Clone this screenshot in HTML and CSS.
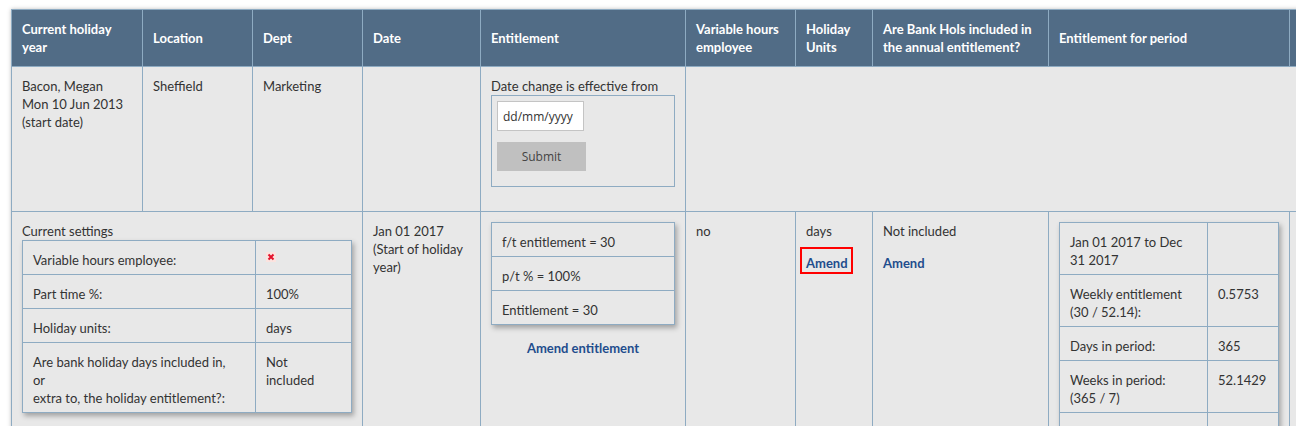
FILE: index.html
```html
<!DOCTYPE html>
<html lang="en">
<head>
    <meta charset="UTF-8">
    <title>Holiday entitlement</title>
    <link rel="stylesheet" href="styles.css">
</head>
<body>
    <div class="page">
        <table class="staff-grid">
            <colgroup>
                <col class="c-year">
                <col class="c-location">
                <col class="c-dept">
                <col class="c-date">
                <col class="c-ent">
                <col class="c-var">
                <col class="c-units">
                <col class="c-bank">
                <col class="c-period">
                <col class="c-more">
            </colgroup>
            <thead>
                <tr>
                    <th>Current holiday year</th>
                    <th>Location</th>
                    <th>Dept</th>
                    <th>Date</th>
                    <th>Entitlement</th>
                    <th>Variable hours employee</th>
                    <th>Holiday Units</th>
                    <th>Are Bank Hols included in the annual entitlement?</th>
                    <th>Entitlement for period</th>
                    <th></th>
                </tr>
            </thead>
            <tbody>
                <tr>
                    <td>Bacon, Megan<br>Mon 10 Jun 2013<br>(start date)</td>
                    <td>Sheffield</td>
                    <td>Marketing</td>
                    <td></td>
                    <td>
                        Date change is effective from
                        <form class="change-box" onsubmit="return false">
                            <input type="text" class="date-input" placeholder="dd/mm/yyyy">
                            <button type="submit" class="submit-btn">Submit</button>
                        </form>
                    </td>
                    <td colspan="5"></td>
                </tr>
                <tr>
                    <td colspan="3">
                        Current settings
                        <table class="inner settings">
                            <tr>
                                <td class="label">Variable hours employee:</td>
                                <td>
                                    <svg class="cross" width="10" height="10" viewBox="0 0 10 10">
                                        <rect width="10" height="10" fill="#fbe3df"/>
                                        <path d="M2.5 2.5 L7.5 7.5 M7.5 2.5 L2.5 7.5" stroke="#e3132c" stroke-width="2"/>
                                    </svg>
                                </td>
                            </tr>
                            <tr>
                                <td class="label">Part time %:</td>
                                <td>100%</td>
                            </tr>
                            <tr>
                                <td class="label">Holiday units:</td>
                                <td>days</td>
                            </tr>
                            <tr>
                                <td class="label">Are bank holiday days included in,<br>or<br>extra to, the holiday entitlement?:</td>
                                <td>Not<br>included</td>
                            </tr>
                        </table>
                    </td>
                    <td>Jan 01 2017<br>(Start of holiday<br>year)</td>
                    <td>
                        <table class="inner calc">
                            <tr><td>f/t entitlement = 30</td></tr>
                            <tr><td>p/t % = 100%</td></tr>
                            <tr><td>Entitlement = 30</td></tr>
                        </table>
                        <p class="centered"><a href="#" class="amend">Amend entitlement</a></p>
                    </td>
                    <td>no</td>
                    <td>
                        days
                        <p><a href="#" class="amend flagged">Amend</a></p>
                    </td>
                    <td>
                        Not included
                        <p><a href="#" class="amend">Amend</a></p>
                    </td>
                    <td>
                        <table class="inner period">
                            <tr>
                                <td class="label">Jan 01 2017 to Dec<br>31 2017</td>
                                <td></td>
                            </tr>
                            <tr>
                                <td class="label">Weekly entitlement<br>(30 / 52.14):</td>
                                <td>0.5753</td>
                            </tr>
                            <tr>
                                <td class="label">Days in period:</td>
                                <td>365</td>
                            </tr>
                            <tr>
                                <td class="label">Weeks in period:<br>(365 / 7)</td>
                                <td>52.1429</td>
                            </tr>
                            <tr class="spacer-row">
                                <td class="label"></td>
                                <td></td>
                            </tr>
                        </table>
                    </td>
                    <td></td>
                </tr>
            </tbody>
        </table>
    </div>
</body>
</html>
```

FILE: styles.css
```css
html, body {
    margin: 0;
    overflow: hidden;
    background: #fff;
}
body {
    font-family: Lato, "Liberation Sans", sans-serif;
    font-size: 13px;
    line-height: 18px;
    color: #333;
}
.page {
    padding: 9px 0 0 11px;
}
.staff-grid {
    border-collapse: collapse;
    table-layout: fixed;
    width: 1400px;
    background: #e8e8e8;
    box-shadow: 0 0 4px rgba(0, 0, 0, 0.25);
}
.c-year { width: 131px; }
.c-location { width: 110px; }
.c-dept { width: 110px; }
.c-date { width: 118px; }
.c-ent { width: 205px; }
.c-var { width: 110px; }
.c-units { width: 77px; }
.c-bank { width: 176px; }
.c-period { width: 241px; }
.staff-grid th,
.staff-grid > tbody > tr > td {
    border: 1px solid #8eabc2;
    padding: 10px 10px;
    text-align: left;
    vertical-align: top;
}
.staff-grid th {
    background: #516c86;
    color: #fff;
    font-weight: bold;
    vertical-align: middle;
    height: 36px;
}
.change-box {
    margin: 0 0 14px;
    padding: 5px 5px 15px;
    border: 1px solid #8eabc2;
}
.date-input {
    display: block;
    box-sizing: border-box;
    width: 87px;
    height: 30px;
    padding: 0 5px;
    border: 1px solid #c4c4c4;
    font-family: "Open Sans", sans-serif;
    font-size: 12px;
    color: #333;
}
.date-input::placeholder {
    color: #333;
}
.submit-btn {
    display: block;
    width: 89px;
    height: 29px;
    margin-top: 11px;
    border: none;
    background: #c0c0c0;
    color: #444;
    font-family: "Open Sans", sans-serif;
    font-size: 12px;
}
.inner {
    width: 100%;
    border-collapse: collapse;
    box-shadow: 2px 3px 5px rgba(0, 0, 0, 0.3);
}
.inner td {
    border: 1px solid #8eabc2;
    padding: 10px 10px 5px;
    vertical-align: top;
}
.settings .label {
    width: 212px;
}
.period .label {
    width: 127px;
}
.spacer-row td {
    height: 36px;
}
.cross {
    display: block;
    margin-top: 1px;
}
td p {
    margin: 14px 0 0;
}
.centered {
    text-align: center;
}
.amend {
    color: #1f4d8d;
    font-weight: bold;
    text-decoration: none;
}
.flagged {
    position: relative;
    display: inline-block;
}
.flagged::after {
    content: "";
    position: absolute;
    left: -6px;
    right: -5px;
    top: -7px;
    bottom: -2px;
    border: 2px solid #f00;
}
```
